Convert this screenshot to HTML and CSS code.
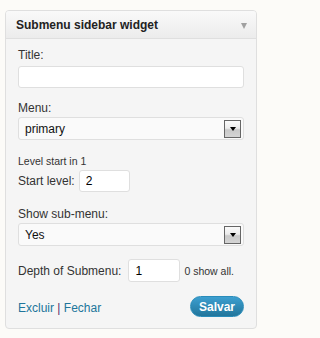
FILE: index.html
```html
<!DOCTYPE html>
<html>
<head>
<meta charset="utf-8">
<link rel="stylesheet" href="styles.css">
</head>
<body>
<div class="widget">
  <div class="widget-top">
    <h4 class="widget-title">Submenu sidebar widget</h4>
    <span class="toggle"></span>
  </div>
  <div class="widget-inside">
    <div class="field">
      <label class="lbl">Title:</label>
      <input class="text wide" type="text" value="">
    </div>
    <div class="field menu">
      <label class="lbl">Menu:</label>
      <div class="select"><span class="sel-val">primary</span><span class="sel-btn"><span class="tri"></span></span></div>
    </div>
    <div class="field level">
      <div class="small">Level start in 1</div>
      <div class="row"><label class="lbl">Start level:</label><input class="text num" type="text" value="2"></div>
    </div>
    <div class="field">
      <label class="lbl">Show sub-menu:</label>
      <div class="select"><span class="sel-val">Yes</span><span class="sel-btn"><span class="tri"></span></span></div>
    </div>
    <div class="row depth"><label class="lbl">Depth of Submenu:</label><input class="text num" type="text" value="1"><span class="small hint">0 show all.</span></div>
    <div class="actions">
      <div class="links"><a href="#">Excluir</a> <span class="sep">|</span> <a href="#">Fechar</a></div>
      <button class="save">Salvar</button>
    </div>
  </div>
</div>
</body>
</html>
```
FILE: styles.css
```css
html, body { margin: 0; padding: 0; }
body {
  background: #fcfbf8;
  font-family: "Liberation Sans", Arial, sans-serif;
  color: #333;
  width: 268px;
  height: 338px;
}
.widget {
  margin: 10px 0 0 5px;
  width: 252px;
  box-sizing: border-box;
  border: 1px solid #dfdfdf;
  border-radius: 4px;
  background: #f5f5f5;
}
.widget-top {
  height: 27px;
  display: flex;
  align-items: center;
  justify-content: space-between;
  padding: 0 9px 0 10px;
  background: linear-gradient(#f9f9f9, #ececec);
  border-bottom: 1px solid #dfdfdf;
  border-radius: 3px 3px 0 0;
}
.widget-title {
  margin: 0;
  font-size: 12px;
  font-weight: bold;
  color: #222;
  line-height: 16px;
  padding-top: 1px;
}
.toggle {
  width: 0; height: 0;
  border-left: 3.5px solid transparent;
  border-right: 3.5px solid transparent;
  border-top: 6px solid #a0a0a0;
  margin-top: 3px;
}
.widget-inside {
  padding: 8px 12px 11px 12px;
}
.lbl {
  display: block;
  font-size: 12px;
  line-height: 16px;
  color: #333;
}
.field { margin-bottom: 12px; }
.field.menu { margin-bottom: 14px; }
.text {
  box-sizing: border-box;
  height: 22px;
  border: 1px solid #dfdfdf;
  border-radius: 3px;
  background: #fff;
  font-family: "Liberation Sans", Arial, sans-serif;
  font-size: 12px;
  color: #000;
  padding: 0 6px;
  margin: 0;
  outline: none;
}
.wide { width: 100%; display: block; margin-top: 3px; }
.select {
  box-sizing: border-box;
  margin-top: 1px;
  height: 23px;
  border: 1px solid #dfdfdf;
  border-radius: 3px;
  background: #fafafa;
  display: flex;
  align-items: center;
  justify-content: space-between;
  padding: 0 2px 0 6px;
  font-size: 12px;
  color: #111;
}
.sel-btn {
  box-sizing: border-box;
  width: 17px;
  height: 18px;
  border: 1px solid #666;
  background: linear-gradient(#fafafa 0%, #ececec 45%, #c9c9c9 55%, #d4d4d4 100%);
  display: flex;
  align-items: center;
  justify-content: center;
}
.tri {
  width: 0; height: 0;
  border-left: 3.5px solid transparent;
  border-right: 3.5px solid transparent;
  border-top: 4px solid #000;
  margin-top: 1px;
}
.small { font-size: 10.5px; line-height: 14px; color: #333; }
.level .small { margin-bottom: 2px; }
.level { margin-bottom: 14px; }
.row { display: flex; align-items: center; }
.row .lbl { margin-right: 4px; }
.num { width: 51px; height: 22px; }
.depth { margin-top: 13px; margin-bottom: 14px; }
.depth .num { width: 52px; height: 23px; margin-left: 3px; }
.hint { margin-left: 4px; }
.actions {
  display: flex;
  align-items: center;
  justify-content: space-between;
}
.links { font-size: 12px; line-height: 16px; padding-top: 2px; }
.links a { color: #21759b; text-decoration: none; }
.sep { color: #5b2e6a; }
.save {
  box-sizing: border-box;
  height: 21px;
  width: 54px;
  border: 1px solid #298cba;
  border-radius: 11px;
  background: linear-gradient(#3d9fd0, #21759b);
  color: #fff;
  font-family: "Liberation Sans", Arial, sans-serif;
  font-size: 12px;
  font-weight: bold;
  padding: 0;
  margin: 0;
}
```
